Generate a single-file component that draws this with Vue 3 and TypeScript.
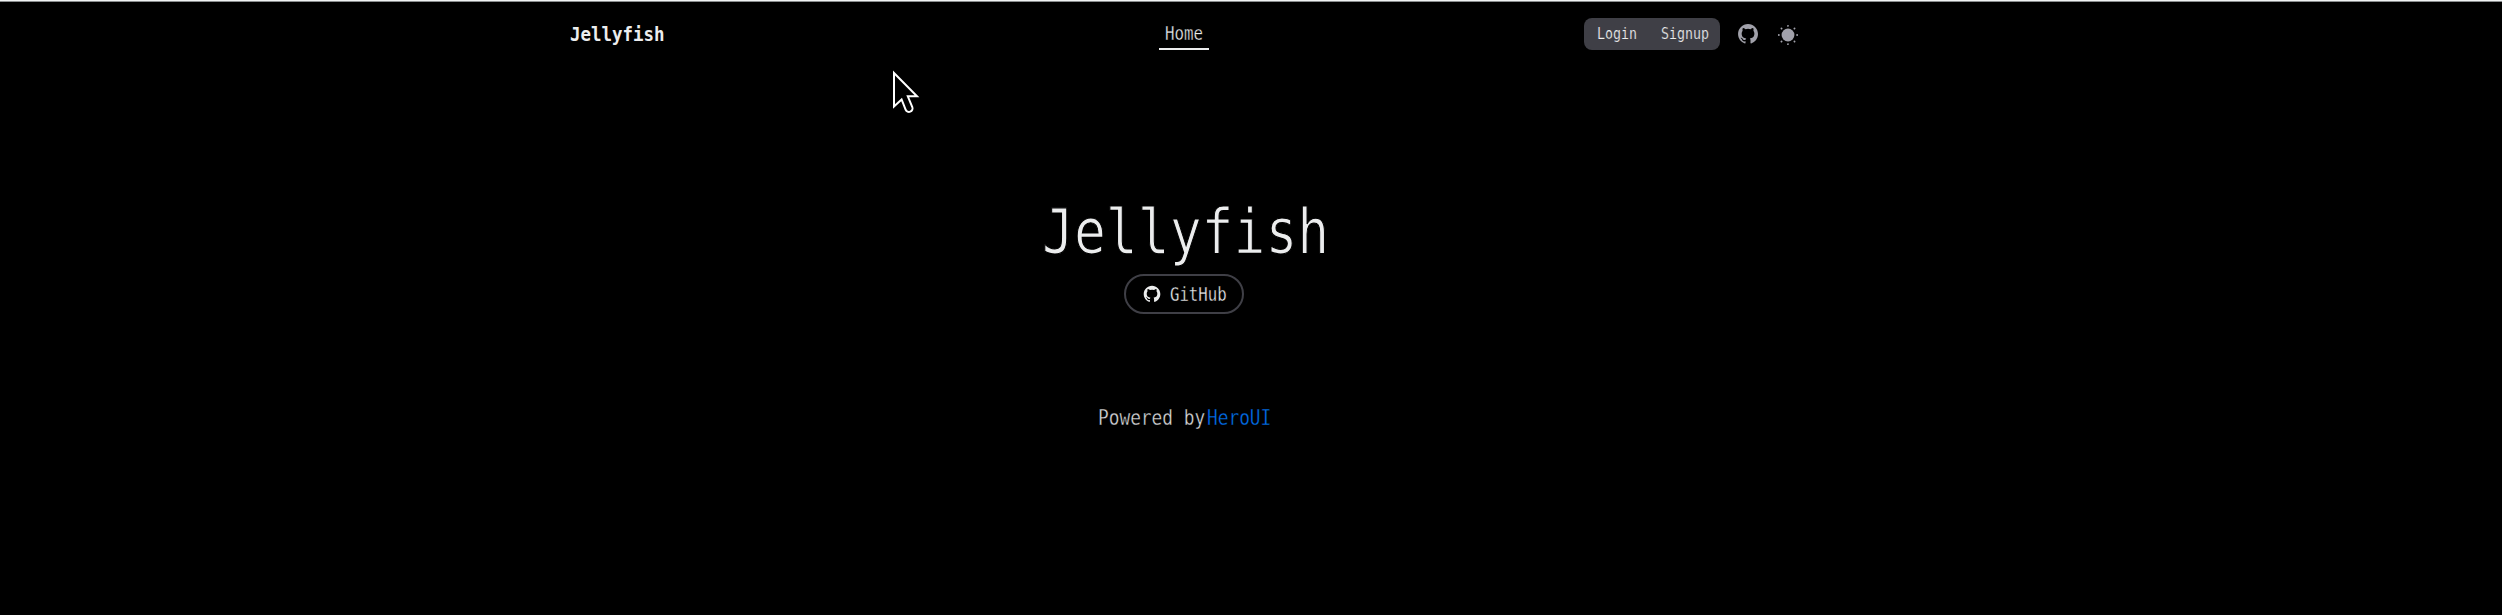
<script setup lang="ts">
const githubPath =
  'M12.026 2c-5.509 0-9.974 4.465-9.974 9.974 0 4.406 2.857 8.145 6.821 9.465.499.09.679-.217.679-.481 0-.237-.008-.865-.011-1.696-2.775.602-3.361-1.338-3.361-1.338-.452-1.152-1.107-1.459-1.107-1.459-.905-.619.069-.605.069-.605 1.002.07 1.527 1.028 1.527 1.028.89 1.524 2.336 1.084 2.902.829.091-.645.351-1.085.635-1.334-2.214-.251-4.542-1.107-4.542-4.93 0-1.087.389-1.979 1.024-2.675-.101-.253-.446-1.268.099-2.64 0 0 .837-.269 2.742 1.021a9.582 9.582 0 0 1 2.496-.336 9.554 9.554 0 0 1 2.496.336c1.906-1.291 2.742-1.021 2.742-1.021.545 1.372.203 2.387.099 2.64.64.696 1.024 1.587 1.024 2.675 0 3.833-2.33 4.675-4.552 4.922.355.308.675.916.675 1.846 0 1.334-.012 2.41-.012 2.737 0 .267.178.577.687.479C19.146 20.115 22 16.379 22 11.974 22 6.465 17.535 2 12.026 2z'
const sunCore = 'M19 12a7 7 0 11-7-7 7 7 0 017 7z'
const sunRays =
  'M12 22.96a.969.969 0 01-1-.96v-.08a1 1 0 012 0 1.038 1.038 0 01-1 1.04zm7.14-2.82a1.024 1.024 0 01-.71-.29l-.13-.13a1 1 0 011.41-1.41l.13.13a1 1 0 010 1.41.984.984 0 01-.7.29zm-14.28 0a1.024 1.024 0 01-.71-.29 1 1 0 010-1.41l.13-.13a1 1 0 011.41 1.41l-.13.13a1 1 0 01-.7.29zM22 13h-.08a1 1 0 010-2 1.038 1.038 0 011.04 1 .969.969 0 01-.96 1zM2.08 13H2a1 1 0 010-2 1.038 1.038 0 011.04 1 .969.969 0 01-.96 1zm16.93-7.01a1.024 1.024 0 01-.71-.29 1 1 0 010-1.41l.13-.13a1 1 0 011.41 1.41l-.13.13a.984.984 0 01-.7.29zm-14.02 0a1.024 1.024 0 01-.71-.29l-.13-.14a1 1 0 011.41-1.41l.13.13a1 1 0 010 1.41.97.97 0 01-.7.3zM12 3.04a.969.969 0 01-1-.96V2a1 1 0 012 0 1.038 1.038 0 01-1 1.04z'
</script>

<template>
  <div class="page">
    <header class="navbar">
      <a class="brand"><span class="narrow">Jellyfish</span></a>
      <a class="nav-link"><span class="narrow">Home</span></a>
      <div class="actions">
        <div class="auth">
          <button class="auth-btn login"><span class="narrow">Login</span></button>
          <button class="auth-btn signup"><span class="narrow">Signup</span></button>
        </div>
        <svg class="icon-github" viewBox="0 0 24 24"><path :d="githubPath" /></svg>
        <svg class="icon-sun" viewBox="0 0 24 24"><path :d="sunCore" /><path :d="sunRays" /></svg>
      </div>
    </header>

    <main class="hero">
      <h1 class="title"><span class="narrow">Jellyfish</span></h1>
      <a class="repo">
        <svg class="icon-repo" viewBox="0 0 24 24"><path :d="githubPath" /></svg>
        <span class="repo-label"><span class="narrow">GitHub</span></span>
      </a>
    </main>

    <footer class="footer">
      <span class="powered"><span class="narrow">Powered by</span></span>
      <a class="heroui"><span class="narrow">HeroUI</span></a>
    </footer>

    <svg class="cursor" viewBox="0 0 28 44">
      <path d="M4 3V36.5L11.6 29.4L15.6 39.6A3.55 3.55 0 0 0 22.3 37L17.8 26.3H27Z" />
    </svg>
  </div>
</template>

<style>
body {
  background: #000;
}
</style>

<style scoped>
.page {
  position: relative;
  box-sizing: border-box;
  width: 2502px;
  height: 615px;
  padding-right: 134px;
  overflow: hidden;
  background: #000;
  color: #ecedee;
  font-family: 'DejaVu Sans Mono', monospace;
  border-top: 1px solid #f1f3f3;
  box-shadow: inset 0 1px 0 #8b8e8f;
}

/* Condensed monospace: each label box holds the final width */
.narrow {
  display: inline-block;
  white-space: pre;
  transform: scaleX(var(--sx));
  transform-origin: 0 50%;
}

.navbar {
  display: grid;
  grid-template-columns: 590px 50px 1fr;
  width: 1230px;
  height: 65px;
  margin: 0 auto;
}

.brand {
  --sx: 0.872;
  width: 95px;
  height: 30px;
  margin: 18px 0 0 1px;
  font-size: 20px;
  font-weight: 700;
  line-height: 30px;
}

.nav-link {
  --sx: 0.83;
  box-sizing: border-box;
  width: 50px;
  height: 32px;
  margin-top: 17px;
  padding-left: 6px;
  border-bottom: 2px solid #ecedee;
  font-size: 19px;
  line-height: 30px;
  -webkit-text-stroke: 0.35px #000;
}

.actions {
  display: flex;
  justify-content: flex-end;
  align-items: flex-start;
}

.auth {
  display: flex;
  width: 136px;
  height: 32px;
  margin-top: 17px;
  border-radius: 8px;
  background: #3f3f46;
}

.auth-btn {
  --sx: 0.858;
  height: 32px;
  padding: 0;
  border: 0;
  background: none;
  color: #ecedee;
  font-family: inherit;
  font-size: 15.5px;
  line-height: 32px;
  text-align: left;
  -webkit-text-stroke: 0.2px #3f3f46;
}

.login {
  width: 64px;
  padding-left: 12.5px;
}

.signup {
  width: 72px;
  padding-left: 12.5px;
}

.icon-github {
  width: 24px;
  height: 24px;
  margin: 21px 17px 0 16px;
  fill: #a1a1aa;
}

.icon-sun {
  width: 22px;
  height: 22px;
  margin-top: 23px;
  fill: #a1a1aa;
}

.hero {
  display: flex;
  flex-direction: column;
  align-items: center;
  padding-top: 128px;
}

.title {
  --sx: 0.862;
  box-sizing: border-box;
  width: 288px;
  height: 80px;
  margin: 0;
  padding-left: 2px;
  font-size: 61.5px;
  font-weight: 400;
  line-height: 76px;
  -webkit-text-stroke: 1.2px #000;
}

.repo {
  display: flex;
  align-items: center;
  box-sizing: border-box;
  width: 120px;
  height: 40px;
  border: 2px solid #3f3f46;
  border-radius: 20px;
  padding-left: 16px;
}

.icon-repo {
  width: 20px;
  height: 20px;
  fill: #ecedee;
}

.repo-label {
  --sx: 0.825;
  width: 58px;
  margin-left: 8px;
  font-size: 19px;
  line-height: 32px;
  -webkit-text-stroke: 0.35px #000;
}

.footer {
  display: flex;
  justify-content: center;
  width: 172px;
  margin: 88px auto 0;
  font-size: 20.5px;
  line-height: 32px;
  -webkit-text-stroke: 0.35px #000;
}

.powered {
  --sx: 0.868;
  width: 109px;
  color: #d8d8da;
}

.heroui {
  --sx: 0.868;
  width: 63px;
  color: #006fee;
}

.cursor {
  position: absolute;
  left: 890px;
  top: 69px;
  width: 28px;
  height: 44px;
  fill: #000;
  stroke: #fff;
  stroke-width: 2;
  overflow: visible;
}
</style>
